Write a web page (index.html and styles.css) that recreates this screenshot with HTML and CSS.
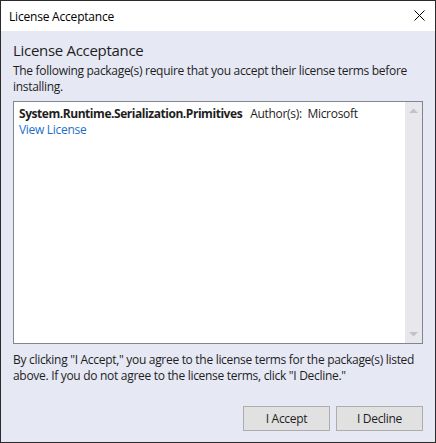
FILE: index.html
```html
<!DOCTYPE html>
<html>
<head>
<meta charset="utf-8">
<link rel="stylesheet" href="styles.css">
</head>
<body>
<div class="window">
  <div class="titlebar">
    <span class="title">License Acceptance</span>
    <svg class="close" width="11" height="11" viewBox="0 0 11 11"><path d="M0.5 0.5 L10.5 10.5 M10.5 0.5 L0.5 10.5" stroke="#000" stroke-width="1" fill="none"/></svg>
  </div>
  <div class="body">
    <div class="heading">License Acceptance</div>
    <p class="desc">The following package(s) require that you accept their license terms before installing.</p>
    <div class="listbox">
      <div class="items">
        <div class="item">
          <div class="line"><span class="pkg">System.Runtime.Serialization.Primitives</span><span class="author">Author(s):&nbsp; Microsoft</span></div>
          <a class="link" href="#">View License</a>
        </div>
      </div>
      <div class="scrollbar">
        <svg width="17" height="17" viewBox="0 0 17 17"><path d="M4 11 L8.5 6.5 L13 11 Z" fill="#c2c3c9"/></svg>
        <svg width="17" height="17" viewBox="0 0 17 17"><path d="M4 6 L8.5 10.5 L13 6 Z" fill="#c2c3c9"/></svg>
      </div>
    </div>
    <p class="notice">By clicking "I Accept," you agree to the license terms for the package(s) listed above. If you do not agree to the license terms, click "I Decline."</p>
    <div class="buttons">
      <button class="btn">I Accept</button>
      <button class="btn">I Decline</button>
    </div>
  </div>
</div>
</body>
</html>
```
FILE: styles.css
```css
* { box-sizing: border-box; }
html, body { margin: 0; padding: 0; background: #fff; }
body { font-family: "Open Sans", "Noto Sans", sans-serif; font-size: 12px; color: #1e1e1e; }
.window {
  width: 436px; height: 443px;
  border: 1px solid #2b2b2b;
  display: flex; flex-direction: column;
  background: #e6e8f4;
}
.titlebar {
  height: 30px; background: #fff;
  display: flex; align-items: center; justify-content: space-between;
  padding: 0 10px 0 8px;
}
.title { font-size: 12px; color: #000; letter-spacing: -0.2px; }
.close { margin-top: -1px; }
.body {
  flex: 1; padding: 8px 12px 11px 12px;
  display: flex; flex-direction: column;
}
.heading { font-size: 15px; line-height: 22px; color: #1e1e1e; letter-spacing: -0.3px; }
.desc { margin: 2px 0 0 0; line-height: 16px; letter-spacing: -0.3px; }
.listbox {
  margin-top: 6px;
  height: 243px;
  border: 1px solid #82858f;
  background: #fff;
  display: flex;
}
.items { flex: 1; padding: 4px 5px; }
.line { display: flex; gap: 8px; line-height: 16px; }
.pkg { font-weight: bold; letter-spacing: -0.45px; }
.author { letter-spacing: -0.3px; }
.link { color: #1e6fc8; text-decoration: none; line-height: 16px; letter-spacing: -0.3px; display: block; }
.scrollbar {
  width: 17px; background: #e8e8ec;
  display: flex; flex-direction: column; justify-content: space-between;
}
.scrollbar svg { display: block; }
.notice { margin: 8px 0 0 0; line-height: 16px; letter-spacing: -0.3px; }
.buttons { margin-top: auto; display: flex; justify-content: flex-end; gap: 6px; }
.btn {
  width: 87px; height: 25px;
  background: #e1e1e1; border: 1px solid #adadad;
  font-family: inherit; font-size: 12px; color: #1e1e1e;
  padding: 0; letter-spacing: -0.3px;
}
```
